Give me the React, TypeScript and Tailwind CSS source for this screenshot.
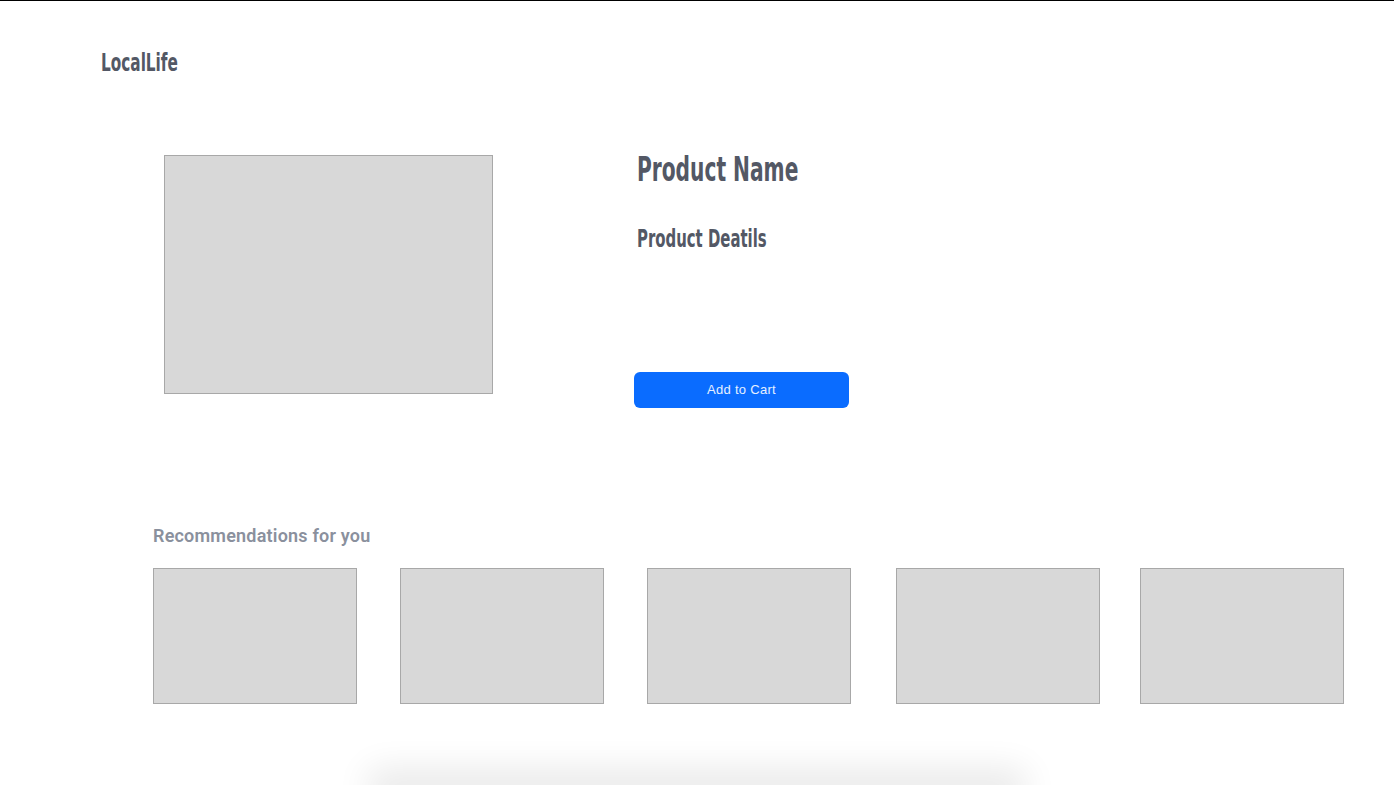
import React from 'react';

const din = { fontFamily: '"Liberation Sans Narrow", "DejaVu Sans Condensed", "Liberation Sans", sans-serif' };

const recs = [
  { id: 1, ml: 'ml-0' },
  { id: 2, ml: 'ml-[43px]' },
  { id: 3, ml: 'ml-[43px]' },
  { id: 4, ml: 'ml-[45px]' },
  { id: 5, ml: 'ml-[40px]' },
];

export default function App() {
  return (
    <div className="h-[785px] overflow-hidden bg-white border-t border-black flex flex-col">
      {/* Header */}
      <header className="pl-[101px] pt-[47px]">
        <h1 style={din} className="text-[25px] font-bold leading-[30px] text-[#535865] origin-left scale-x-[0.68]">
          LocalLife
        </h1>
      </header>

      {/* Product */}
      <section className="flex pt-[77px]">
        <div className="ml-[164px] w-[329px] h-[239px] bg-[#d8d8d8] border border-[#a8a8a8]" />
        <div className="ml-[141px] flex flex-col">
          <h2 style={din} className="ml-[3px] -mt-[6px] text-[34px] font-bold leading-[40px] text-[#535865] origin-left scale-x-[0.66]">
            Product Name
          </h2>
          <h3 style={din} className="ml-[3px] mt-[35px] text-[24px] font-bold leading-[30px] text-[#535865] origin-left scale-x-[0.69]">
            Product Deatils
          </h3>
          <button
            className="mt-[118px] w-[215px] h-[36px] rounded-[6px] bg-[#0a6cff] text-white/90 text-[13px] tracking-[0.3px]"
            style={{ fontFamily: '"Liberation Sans", Arial, sans-serif' }}
          >
            Add to Cart
          </button>
        </div>
      </section>

      {/* Recommendations */}
      <section className="pl-[153px] pt-[114px]">
        <h4 className="text-[18px] font-semibold text-[#8a909d] tracking-[0.2px]" style={{ fontFamily: 'Roboto, "Liberation Sans", sans-serif' }}>
          Recommendations for you
        </h4>
        <div className="mt-[19px] flex">
          {recs.map((r) => (
            <div key={r.id} className={`${r.ml} w-[204px] h-[136px] bg-[#d8d8d8] border border-[#a8a8a8]`} />
          ))}
        </div>
      </section>

      <div className="mt-auto -mb-[4px] mx-auto w-[620px] h-[2px] shadow-[0_0_34px_18px_rgba(0,0,0,0.09)]" />
    </div>
  );
}
